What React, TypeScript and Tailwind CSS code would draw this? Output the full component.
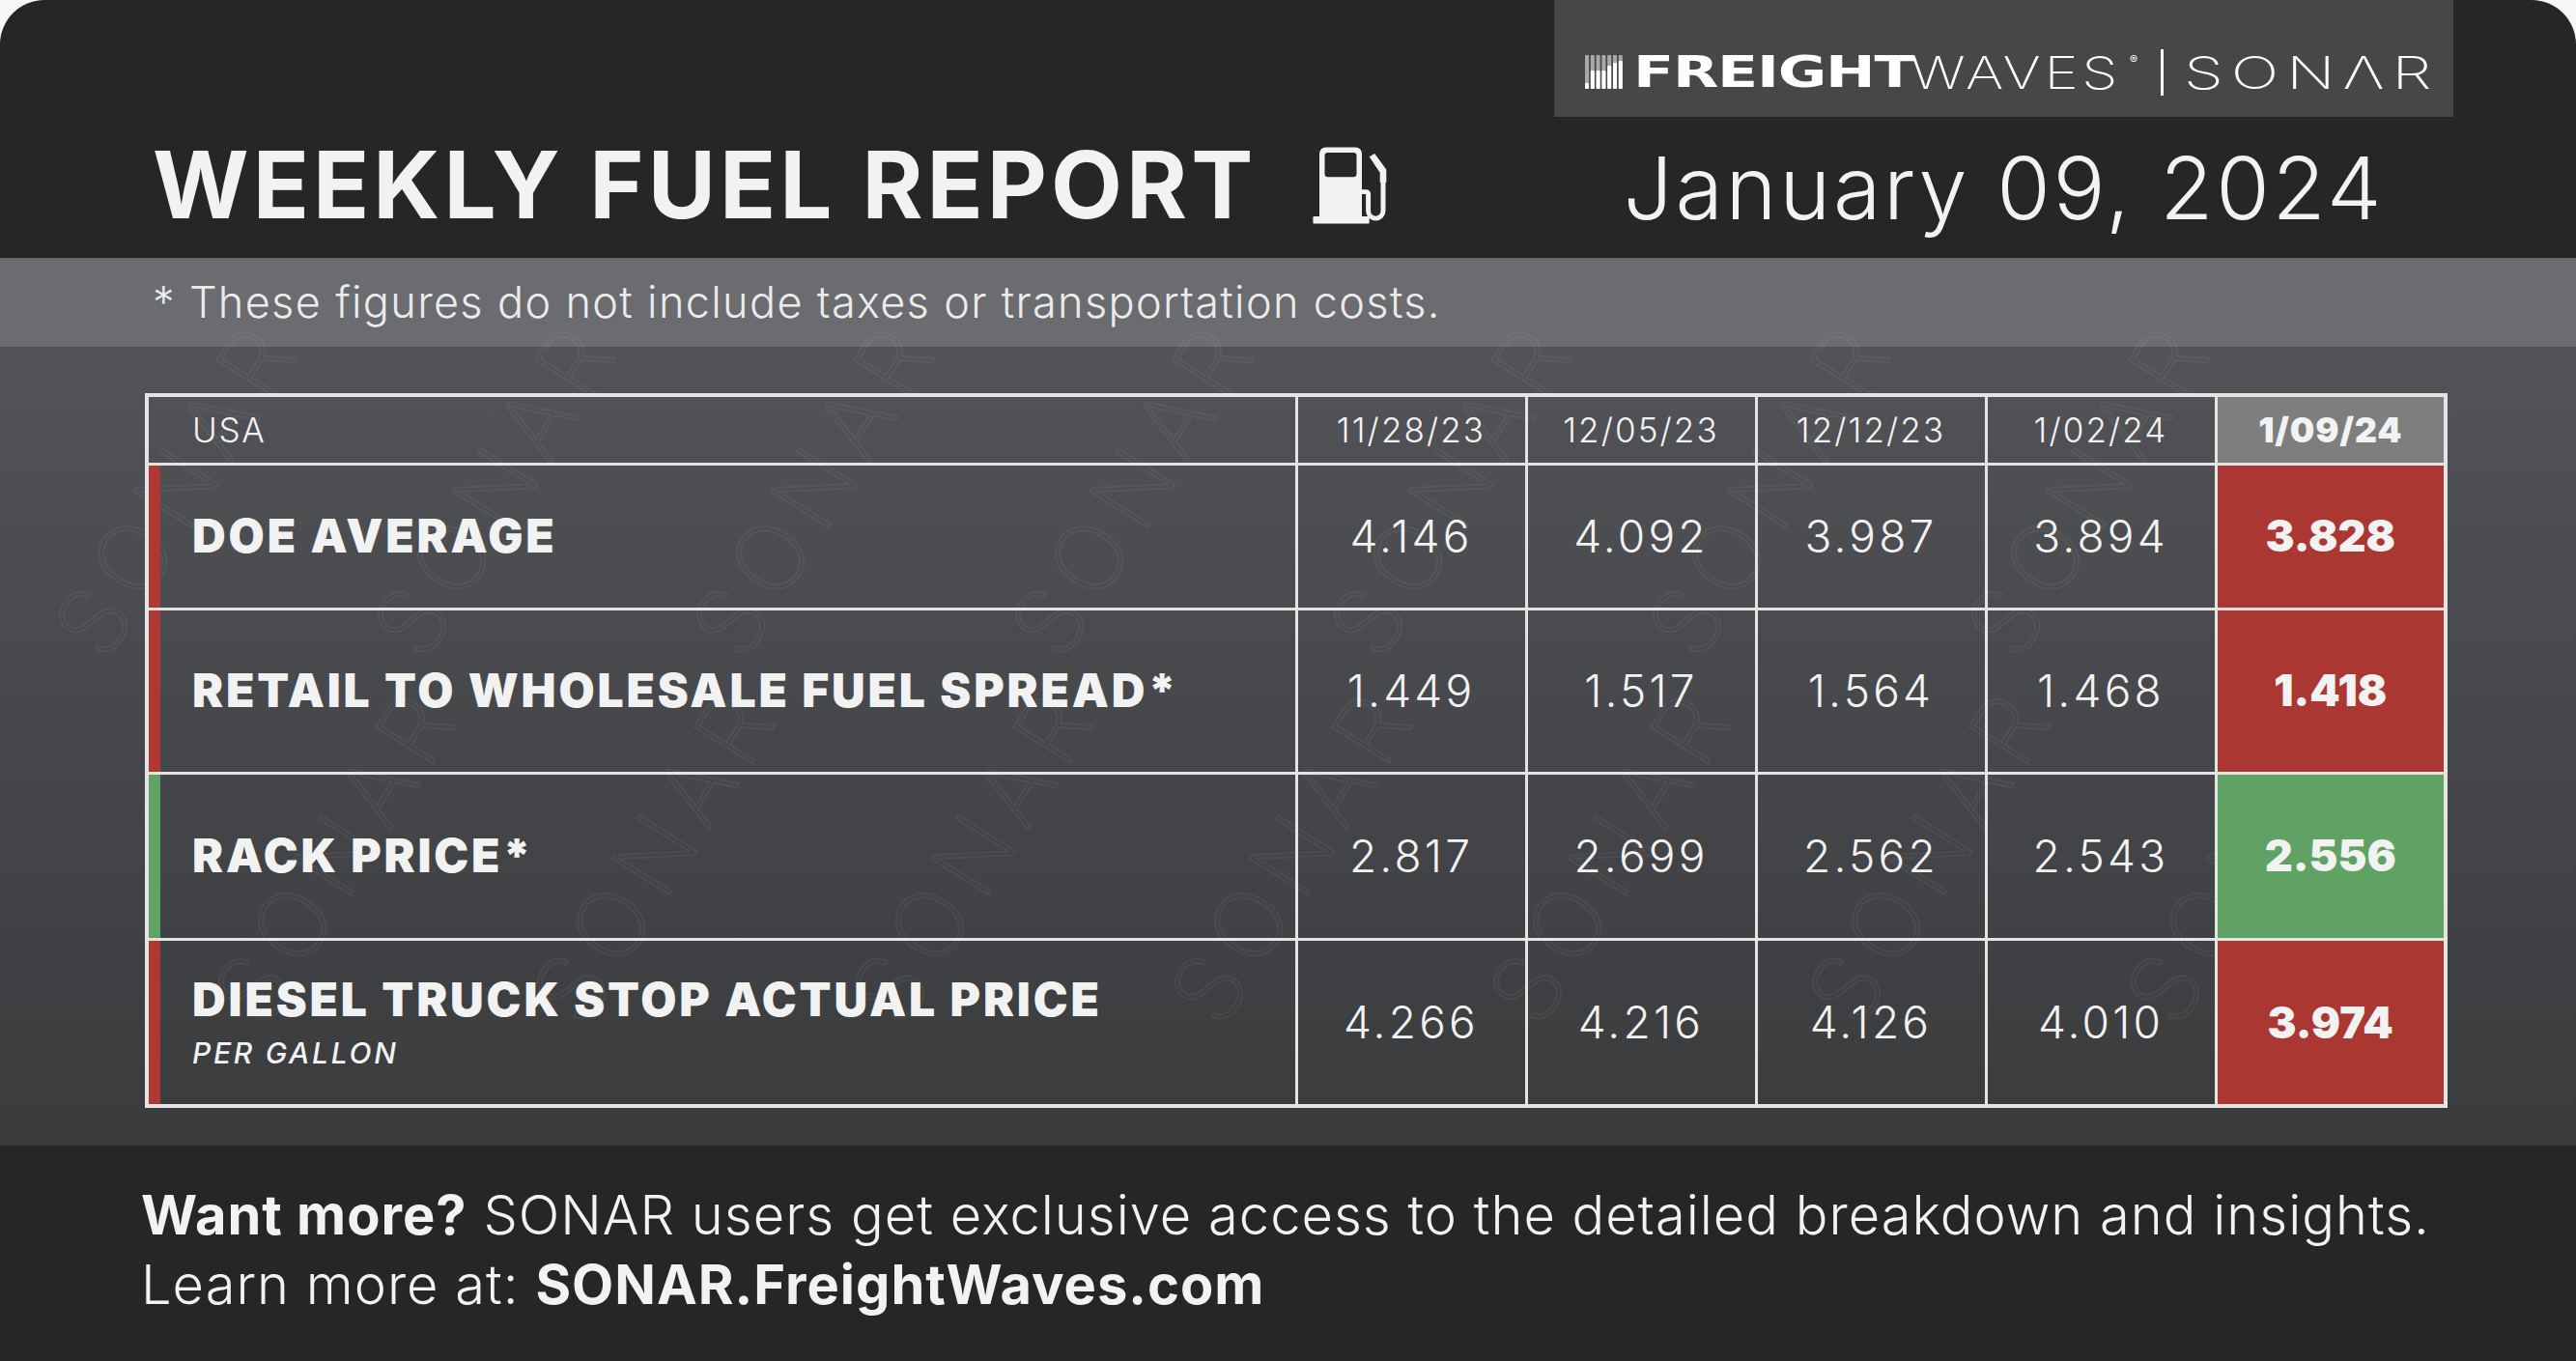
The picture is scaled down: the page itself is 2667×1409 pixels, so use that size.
import React from "react";

type Row = {
  label: string;
  sub?: string;
  values: string[];
  trend: "up" | "down";
  height: string;
};

const dates = ["11/28/23", "12/05/23", "12/12/23", "1/02/24", "1/09/24"];

const rows: Row[] = [
  { label: "DOE AVERAGE", values: ["4.146", "4.092", "3.987", "3.894", "3.828"], trend: "down", height: "h-[150px]" },
  { label: "RETAIL TO WHOLESALE FUEL SPREAD*", values: ["1.449", "1.517", "1.564", "1.468", "1.418"], trend: "down", height: "h-[170px]" },
  { label: "RACK PRICE*", values: ["2.817", "2.699", "2.562", "2.543", "2.556"], trend: "up", height: "h-[172px]" },
  { label: "DIESEL TRUCK STOP ACTUAL PRICE", sub: "PER GALLON", values: ["4.266", "4.216", "4.126", "4.010", "3.974"], trend: "down", height: "h-[173px]" },
];

// watermark anchor points (staggered, kept inside the panel)
const marks: [number, number][] = [];
for (let r = 0; r < 2; r++) {
  for (let c = 0; c < 8; c++) {
    const x = 110 + c * 330 + r * 165;
    if (x < 2380) marks.push([x, 420 + r * 380]);
  }
}

function FuelPump() {
  return (
    <svg viewBox="0 0 80 80" className="w-[88px] h-[88px]" fill="none">
      <path d="M16 4h28a6 6 0 0 1 6 6v60H10V10a6 6 0 0 1 6-6z" fill="#f2f2f2" />
      <rect x="4" y="69" width="53" height="7" rx="1" fill="#f2f2f2" />
      <rect x="15" y="9" width="30" height="23" rx="3" fill="#262626" />
      <path d="M50 46h4a2 2 0 0 1 2 2v16a7 7 0 0 0 14 0V36" stroke="#f2f2f2" strokeWidth="4.5" />
      <path d="M57 13l5-3 11 15v12h-6v-9z" fill="#f2f2f2" />
    </svg>
  );
}

function BarsIcon() {
  const whites = [6, 19, 19, 19, 24, 27, 29];
  return (
    <svg viewBox="0 0 40 35" className="w-[40px] h-[35px]">
      {whites.map((h, i) => (
        <g key={i}>
          <rect x={i * 5.8} y={0} width={4} height={35} rx={1} fill="#a9a9a9" />
          <rect x={i * 5.8} y={35 - h} width={4} height={h} rx={1} fill="#ffffff" />
        </g>
      ))}
    </svg>
  );
}

// faint diagonal SONAR marks behind the table
function Watermark() {
  return (
    <svg className="absolute inset-0 w-full h-full pointer-events-none" aria-hidden="true">
      {marks.map(([x, y], i) => (
        <text
          key={i}
          x={x}
          y={y}
          transform={`rotate(-58 ${x} ${y})`}
          fontFamily="Inter, sans-serif"
          fontWeight={200}
          fontSize={96}
          letterSpacing={12}
          fill="none"
          stroke="rgba(255,255,255,0.05)"
          strokeWidth={2}
        >
          SONAR
        </text>
      ))}
    </svg>
  );
}

function Logo() {
  return (
    <div className="h-[121px] bg-[#474747] flex items-center pl-[32px] pt-[28px] text-white">
      <BarsIcon />
      <span className="ml-[10px] w-[287px] overflow-visible">
        <span className="inline-block origin-left scale-x-[1.37] font-['DejaVu_Sans',sans-serif] font-bold text-[45px] leading-none tracking-[-0.02em]">
          FREIGHT
        </span>
      </span>
      <span className="w-[227px] overflow-visible">
        <span className="inline-block origin-left scale-x-[1.3] font-['Inter',sans-serif] font-extralight text-[46px] leading-none tracking-[0.06em]">
          WAVES
        </span>
      </span>
      <span className="w-[14px] -mt-[26px] text-[12px] leading-none">®</span>
      <span className="ml-[18px] w-[3px] h-[48px] bg-white" />
      <span className="ml-[21px] w-[250px] overflow-visible">
        <span className="inline-block origin-left scale-x-[1.43] font-['Inter',sans-serif] font-extralight text-[46px] leading-none tracking-[0.12em]">
          SONΛR
        </span>
      </span>
    </div>
  );
}

export default function App() {
  return (
    <div className="w-[2667px] h-[1409px] bg-[#f6f6f8] font-['Inter',sans-serif] text-[#f2f2f2]">
      <div className="w-full h-full rounded-t-[46px] overflow-hidden bg-[#262626] flex flex-col">
        {/* Header */}
        <header className="h-[267px] shrink-0 flex justify-between">
          <div className="pl-[158px] pt-[143px] flex items-start gap-[54px]">
            <h1 className="text-[96px] leading-none font-bold tracking-[0.042em]">WEEKLY FUEL REPORT</h1>
            <div className="mt-[5px]">
              <FuelPump />
            </div>
          </div>
          <div className="w-[931px] mr-[127px] flex flex-col">
            <Logo />
            <div className="mt-[29px] text-center text-[90px] leading-none font-light tracking-[0.03em]">
              January 09, 2024
            </div>
          </div>
        </header>

        {/* Note + table */}
        <div className="relative flex-1 flex flex-col overflow-hidden bg-linear-to-b from-[#55565a] to-[#3a3b3d]">
          <div className="h-[92px] shrink-0 bg-[#6b6c70] flex items-center pl-[158px]">
            <p className="text-[45px] font-light text-[#ebebeb] tracking-[0.03em]">
              * These figures do not include taxes or transportation costs.
            </p>
          </div>
          <Watermark />

          <div className="relative flex-1 pl-[150px] pr-[137px] pt-[48px]">
            <table className="w-[2380px] border-collapse border-[4px] border-[#e4e4e4] table-fixed">
              <colgroup>
                <col className="w-[1190px]" />
                {dates.map((d) => (
                  <col key={d} className="w-[238px]" />
                ))}
              </colgroup>
              <thead>
                <tr className="h-[71px]">
                  <th className="border-[3px] border-[#e4e4e4] text-left pl-[45px] text-[35px] font-light tracking-[0.05em]">
                    USA
                  </th>
                  {dates.map((d, i) => (
                    <th
                      key={d}
                      className={
                        i === dates.length - 1
                          ? "border-[3px] border-[#e4e4e4] bg-[#7e7e7e] text-[36px] font-black tracking-[0.02em]"
                          : "border-[3px] border-[#e4e4e4] text-[35px] font-light tracking-[0.06em]"
                      }
                    >
                      {d}
                    </th>
                  ))}
                </tr>
              </thead>
              <tbody>
                {rows.map((row) => (
                  <tr key={row.label} className={row.height}>
                    <td
                      className={
                        row.trend === "up"
                          ? "border-[3px] border-[#e4e4e4] pl-[45px] shadow-[inset_12px_0_0_0_#5fa263]"
                          : "border-[3px] border-[#e4e4e4] pl-[45px] shadow-[inset_12px_0_0_0_#ae3834]"
                      }
                    >
                      <div className="text-[48px] leading-none font-black tracking-[0.06em]">{row.label}</div>
                      {row.sub && (
                        <div className="mt-[16px] text-[30px] leading-none italic font-medium tracking-[0.09em]">
                          {row.sub}
                        </div>
                      )}
                    </td>
                    {row.values.map((v, i) =>
                      i === row.values.length - 1 ? (
                        <td
                          key={i}
                          className={
                            row.trend === "up"
                              ? "border-[3px] border-[#e4e4e4] bg-[#5fa263] text-center text-[45px] font-black"
                              : "border-[3px] border-[#e4e4e4] bg-[#ab3733] text-center text-[45px] font-black"
                          }
                        >
                          {v}
                        </td>
                      ) : (
                        <td
                          key={i}
                          className="border-[3px] border-[#e4e4e4] text-center text-[46px] font-light tracking-[0.07em]"
                        >
                          {v}
                        </td>
                      )
                    )}
                  </tr>
                ))}
              </tbody>
            </table>
          </div>
        </div>

        {/* Footer */}
        <footer className="h-[223px] shrink-0 bg-[#262626] pl-[146px] pt-[36px] text-[56px] leading-[72px] font-light tracking-[0.018em]">
          <p>
            <span className="font-bold">Want more?</span> SONAR users get exclusive access to the detailed breakdown and insights.
          </p>
          <p>
            Learn more at: <span className="font-bold">SONAR.FreightWaves.com</span>
          </p>
        </footer>
      </div>
    </div>
  );
}
